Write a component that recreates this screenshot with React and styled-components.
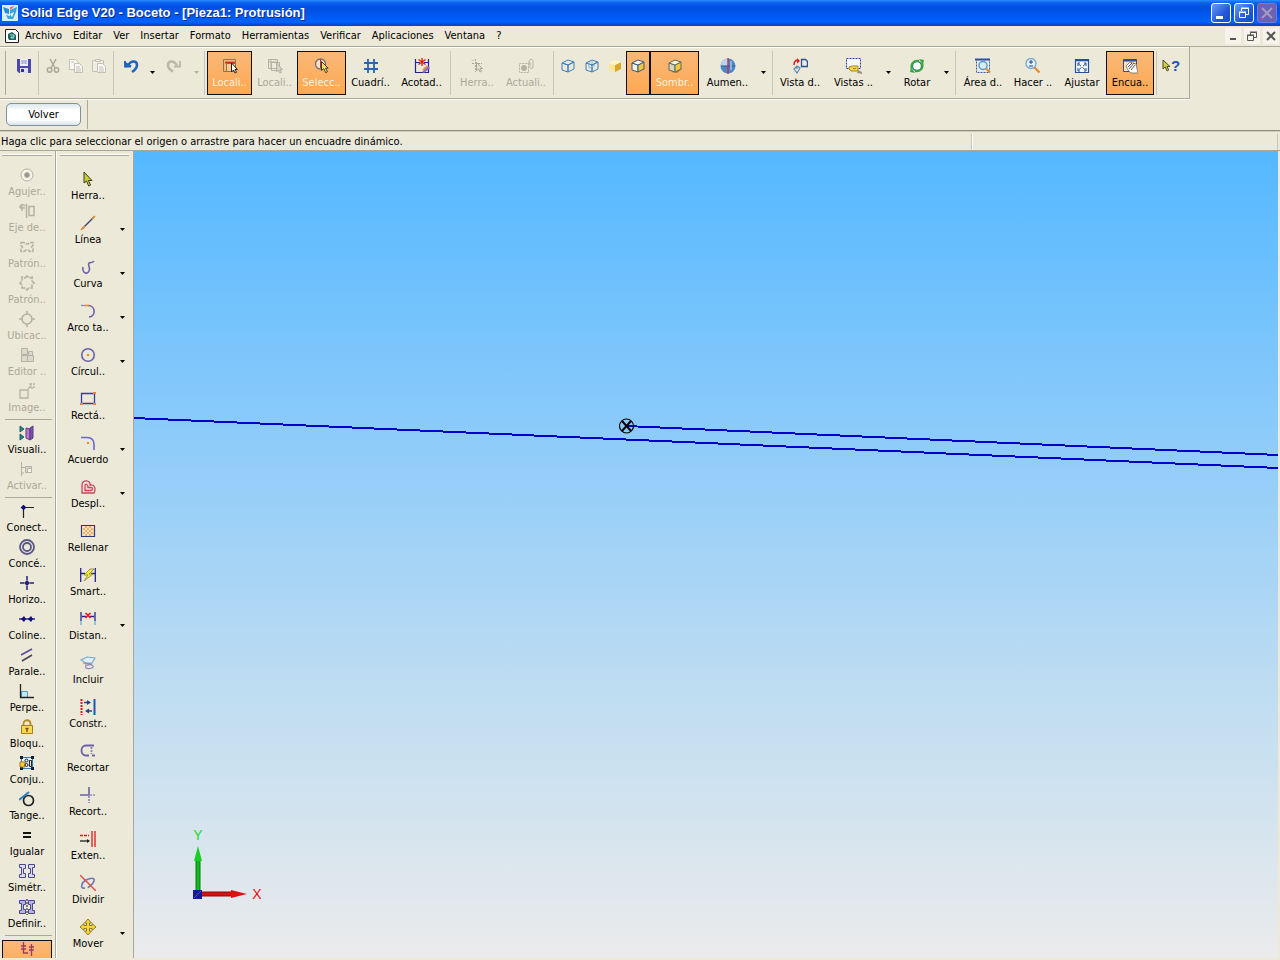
import React from 'react';
import styled, { createGlobalStyle, css } from 'styled-components';

const COLORS = {
  face: '#ece9d8',
  shadow: '#aca899',
  disabled: '#b5b2a3',
  navy: '#10107c',
  blue: '#2c62b8',
  violet: '#6a62a8',
  orange: '#e88a28',
  red: '#d81c1c',
};

const MENU = [
  'Archivo',
  'Editar',
  'Ver',
  'Insertar',
  'Formato',
  'Herramientas',
  'Verificar',
  'Aplicaciones',
  'Ventana',
  '?',
];

const cube = (stroke, side, front = 'none', top = 'none') => (
  <g stroke={stroke} strokeLinejoin="round">
    <path d="M2 5l6 2v7l-6-2z" fill={front} />
    <path d="M8 7l6-3v7l-6 3z" fill={side} />
    <path d="M2 5l6-3 6 2-6 3z" fill={top} />
  </g>
);

const ICONS = {
  save: (
    <g>
      <path d="M1 1h14v14H3l-2-2z" fill="#4a48a8" />
      <path d="M4 1h8v7H4z" fill="#eef" />
      <path d="M5 3h6M5 5h6" stroke="#8a88c8" />
      <path d="M4 10h8v5H4z" fill="#dde" />
      <path d="M5 11h3v3H5z" fill="#33318a" />
    </g>
  ),
  cut: (
    <g stroke="#aaa798" strokeWidth="1.5">
      <path d="M5 1l5 9M11 1l-5 9" />
      <circle cx="4.500" cy="12" r="2.200" />
      <circle cx="11.500" cy="12" r="2.200" />
    </g>
  ),
  copy: (
    <g stroke="#c3c0b4" fill="#f8f7f2">
      <path d="M1.500 1.500h6l3 3v7h-9z" />
      <path d="M6.500 5.500h5l3 3v6h-8z" />
      <path d="M8 9h4M8 11h5M8 13h5M3 4h3" />
    </g>
  ),
  paste: (
    <g stroke="#c3c0b4" fill="#f0eee4">
      <path d="M1.500 2.500h11v11h-11z" />
      <path d="M4.500 1.500h5v2h-5z" />
      <path d="M6.500 5.500h5l3 3v6h-8z" fill="#faf9f5" />
      <path d="M8 9h4M8 11h5M8 13h5" />
    </g>
  ),
  undo: (
    <g stroke="#2163c0" strokeWidth="2.600">
      <path d="M5 7.500C8 2 14 2.500 14 7c0 3-2 5-5 7" />
      <path d="M1 3l1.200 6.500L9 8z" fill="#2163c0" stroke="none" />
      <path d="M2 3v5.500h6" strokeWidth="1.800" />
    </g>
  ),
  redo: (
    <g stroke="#b9b6aa" strokeWidth="2.600">
      <path d="M11 7.500C8 2 2 2.500 2 7c0 3 2 5 5 6.500" />
      <path d="M14 3v5.500H8" strokeWidth="1.800" />
    </g>
  ),
  locate: (
    <g>
      <path d="M1.500 1.500h12v12h-12z" fill="#f6b878" stroke="#8d7350" />
      <path d="M4.500 5.500h9v8h-9z" fill="#fbc890" stroke="#8d7350" />
      <path d="M3 4.500h10" stroke="#e02c1c" strokeWidth="1.800" />
      <path d="M9.500 5v9l2-2 1.500 3 1.500-.7-1.400-2.800h2.400z" fill="#fff" stroke="#222" />
    </g>
  ),
  locateOff: (
    <g stroke={COLORS.disabled}>
      <path d="M1.500 1.500h9v9h-9zM4.500 4.500h8v8h-8zM1 4h9M4 1v9" />
      <path d="M9.500 5v9l2-2 1.500 3 1.500-.7-1.400-2.800h2.400z" fill="#d5d2c6" />
    </g>
  ),
  select: (
    <g>
      <circle cx="6.500" cy="6" r="5" fill="#fbe4cc" stroke="#7c6a70" strokeWidth="1.300" />
      <path d="M6.500 1v9" stroke="#b23c22" />
      <path d="M7.500 3.500v9l2.200-1.800 2 4 1.800-1-2-3.500h2.700z" fill="#efe06a" stroke="#3c3a22" />
    </g>
  ),
  grid: <path d="M5 1v14M11 1v14M1 5h14M1 11h14" stroke={COLORS.blue} strokeWidth="1.800" />,
  dims: (
    <g>
      <path d="M1.500 1v14M14.500 1v14M1.500 14.500h13M2 4.500h4M10 4.500h4" stroke="#24248c" strokeWidth="1.200" />
      <path d="M8 0v8M4.500 1.500l7 5M11.500 1.500l-7 5" stroke="#e01818" strokeWidth="1.300" />
      <path d="M8 14l6-6 2 2-6 5z" fill="#8a6ac0" />
      <path d="M9 12l4-4" stroke="#e88a28" strokeWidth="1.600" />
    </g>
  ),
  pickOff: (
    <g stroke="#aaa798">
      <path d="M6.500 1v4M3 5.500h4M9 5.500h4M6.500 7v7M3 1.500l2 2" strokeDasharray="2 1" />
      <path d="M7.500 4.500v8l2-1.500 1.500 3 1.500-.7-1.400-2.800h2.400z" fill="#e4e1d4" />
    </g>
  ),
  updateOff: (
    <g stroke="#b3b0a4">
      <path d="M1.500 5.500h9v9h-9z" strokeDasharray="2 1" />
      <circle cx="6" cy="10" r="2.500" fill="#b3b0a4" />
      <path d="M11 6c-1-6 5-6 4-1v3c0 4-4 3-3-1V4" />
    </g>
  ),
  wire: cube('#3c7fbe', 'none'),
  wireHidden: (
    <g>
      {cube('#3c7fbe', 'none')}
      <path d="M5 10l6-3M8 2v4M5 4v6" stroke="#8db9dd" />
    </g>
  ),
  shade: cube('none', '#dca62a', '#fbe69a', '#fff6c8'),
  shadeEdge: cube('#345a86', '#f0c83a', '#f4f0dc', '#fff8e0'),
  shadow: (
    <g>
      <path d="M4 14l6 1 5-4-3-3z" fill="#b07a3c" />
      {cube('#5a6a62', '#f0c83a', '#d9d4c0', '#fdf3d0')}
    </g>
  ),
  sharpen: (
    <g>
      <circle cx="8" cy="8" r="7.500" fill="#4c88c6" />
      <path d="M8 .5A7.500 7.500 0 0 0 .5 8H8z" fill="#b7d4ec" />
      <path d="M1 8h14" stroke="#245a94" />
      <path d="M11 3v9" stroke="#86b4e0" strokeWidth="2" />
      <path d="M8 0v16" stroke="#d02840" strokeWidth="1.300" />
    </g>
  ),
  viewOrient: (
    <g>
      <path d="M2 7C2 3 4 2 6 2.500" stroke={COLORS.red} strokeWidth="1.500" />
      <path d="M5 0l3 3-3 2.500z" fill={COLORS.red} />
      <path d="M9.500 1.500h4l2 2v5h-6z" stroke="#24509a" strokeWidth="1.300" />
      <path d="M2 11l3-3 3 2-3 5zM5 8v3" stroke="#5a86b6" strokeWidth="1.200" />
    </g>
  ),
  namedViews: (
    <g>
      <path d="M.5 .5h14v10H.5z" fill="#f4f8fc" stroke="#2a3f98" strokeDasharray="2 1" />
      <path d="M3 9l3-1h6v5H5l-2-2z" fill="#f6d44a" stroke="#a88420" />
      <path d="M12 12l4 2v2l-5-1z" fill="#9a9484" />
      <path d="M7 10.500h3" stroke="#a88420" />
    </g>
  ),
  rotate: (
    <g>
      <circle cx="8" cy="8" r="4.500" fill="#f6fbf8" stroke="#2a6fa8" strokeWidth="1.300" />
      <path d="M3 11C1 6 5 2 10 3M13 5c2 5-2 9-7 8" stroke="#38a838" strokeWidth="2" />
      <path d="M10 1l5 1-1 5zM6 15l-5-1 1-5z" fill="#38a838" />
    </g>
  ),
  zoomArea: (
    <g>
      <path d="M1.500 1.500h13v13h-13z" stroke="#3a62b0" strokeDasharray="2 1" />
      <path d="M0 1.500h15" stroke="#2a4fa8" strokeWidth="2" />
      <circle cx="8" cy="7.500" r="4" fill="#d8ecf8" stroke="#5a96cc" strokeWidth="1.400" />
      <path d="M11 10.500l4 4" stroke={COLORS.orange} strokeWidth="2.200" />
    </g>
  ),
  zoom: (
    <g>
      <circle cx="6" cy="5.500" r="5" fill="#e6f2fa" stroke="#7aa6cc" strokeWidth="1.300" />
      <path d="M6 2v4M4 4h4M4 8h4" stroke="#24408c" />
      <path d="M9.500 9.500l5 5" stroke={COLORS.orange} strokeWidth="2.200" />
    </g>
  ),
  fit: (
    <g>
      <path d="M1.500 1.500h13v13h-13z" fill="#f4f8fc" stroke="#24509a" strokeWidth="1.200" />
      <path d="M1 2.500h14" stroke="#24509a" strokeWidth="1.600" />
      <path d="M4 5.500l8 7M12 5.500l-8 7" stroke="#24509a" strokeDasharray="4 2" />
      <path d="M4 8V5h2M12 8V5h-2M4 10v3h2M12 10v3h-2" stroke="#24509a" />
    </g>
  ),
  pan: (
    <g>
      <path d="M1.500 1.500h13v12h-13z" fill="#f8e2c0" stroke="#3a4a86" />
      <path d="M1 2.500h14" stroke="#2a4a9a" strokeWidth="2" />
      <path d="M4 8l4-4 6 2 2 9H9l-3-3z" fill="#fff" stroke="#8a8478" />
      <path d="M6 9l4-4M7 11l5-6M9 12l4-5" stroke="#5a544a" />
    </g>
  ),
  help: <path d="M1 2v9l2.200-2 2 4 1.500-1-1.800-3.500H8z" fill="#cdd048" stroke="#4a4c20" />,
  hole: (
    <g stroke={COLORS.disabled}>
      <circle cx="8" cy="8" r="6" fill="#f6f4ea" />
      <circle cx="8" cy="8" r="2.500" fill="#98958a" />
    </g>
  ),
  axisOff: (
    <g stroke={COLORS.disabled} strokeWidth="1.500">
      <path d="M7.500 1v14M1 5h5M3 3v5M10 3.500h5v9h-5z" />
      <path d="M1 5c0-4 4-4 5-2" />
    </g>
  ),
  patternRect: (
    <g stroke={COLORS.disabled} strokeWidth="1.600" strokeDasharray="4 1">
      <path d="M2 3.500h3l2 1.500h2l2-1.500h3v3L12.500 8l1.500 1.500v3h-3L9 11H7l-2 1.500H2v-3L3.500 8 2 6.500z" />
    </g>
  ),
  patternCircle: (
    <g stroke={COLORS.disabled} strokeWidth="1.600">
      <path d="M6 3l2-2 2 2 3-1v4l2 2-2 2v3l-3 0-2 2-2-2H3v-3L1 8l2-2V2z" strokeDasharray="5 1" />
    </g>
  ),
  location: (
    <g stroke={COLORS.disabled} strokeWidth="1.600">
      <circle cx="8" cy="8" r="5" />
      <path d="M8 0v3M8 13v3M0 8h3M13 8h3" />
    </g>
  ),
  editor: (
    <g stroke={COLORS.disabled}>
      <path d="M2.500 1.500h6v6h-6zM2.500 8.500h6v6h-6zM8.500 8.500h6v6h-6zM9.500 4.500h4v4h-4z" fill="#dcd9cc" />
    </g>
  ),
  image: (
    <g stroke={COLORS.disabled} strokeWidth="1.300">
      <path d="M1 7h8v8H1z" />
      <path d="M9 6l4-4M11 1h4v4h-4z" strokeDasharray="2 1" />
    </g>
  ),
  visual: (
    <g>
      <path d="M1 1l4 3-4 3zM1 9l4 3-4 3z" fill="#1c8a7c" stroke="#24606c" />
      <path d="M7 3l4 1v11l-4-2z" fill="#b878c8" stroke="#583a88" />
      <path d="M11 3l3-2v12l-3 2z" fill="#7a50a8" stroke="#583a88" />
    </g>
  ),
  activate: (
    <g stroke={COLORS.disabled}>
      <path d="M2.500 1v14M2 6.500h5M2 12h3" />
      <path d="M6.500 5.500h6v6h-6z" fill="#dcd9cc" />
      <path d="M8.500 7.500h4v4h-4z" fill="#f8f7f0" />
    </g>
  ),
  connect: (
    <g stroke="#222" strokeWidth="1.200">
      <path d="M4.500 15V4.500H15" />
      <path d="M2.500 4.500l2-2 2 2-2 2z" fill={COLORS.navy} stroke={COLORS.navy} />
    </g>
  ),
  concentric: (
    <g stroke="#5a5688" strokeWidth="1.800">
      <circle cx="8" cy="8" r="7" />
      <circle cx="8" cy="8" r="4" />
    </g>
  ),
  horizontal: (
    <g stroke="#24207c" strokeWidth="1.500">
      <path d="M8 1v14M1 8h14" strokeDasharray="4 1" />
      <path d="M5 8l3-3 3 3-3 3z" fill="#24207c" stroke="none" />
    </g>
  ),
  collinear: (
    <g>
      <path d="M0 8h16" stroke={COLORS.navy} strokeWidth="1.300" />
      <path d="M2 8l3-3 2 3-2 3zM9 8l3-3 2 3-2 3z" fill={COLORS.navy} />
    </g>
  ),
  parallel: (
    <g strokeWidth="1.600">
      <path d="M2 8l11-6" stroke="#5a4c9c" />
      <path d="M3 14l10-6" stroke="#4a4454" />
    </g>
  ),
  perpendicular: (
    <g>
      <path d="M2.500 8.500h6v6h-6z" fill="#c4e6f4" stroke="#4a9ac4" />
      <path d="M1.500 1v13.500H15" stroke="#222" strokeWidth="1.300" />
    </g>
  ),
  lock: (
    <g>
      <path d="M4.500 7V5c0-5 7-5 7 0v2" stroke="#b88a20" strokeWidth="1.800" />
      <path d="M2.500 6.500h11v8h-11z" fill="#fbd850" stroke="#a87c18" />
      <path d="M8 9v4M6.500 9.500h3" stroke="#6a4c10" strokeWidth="1.300" />
    </g>
  ),
  rigid: (
    <g>
      <path d="M2.500 2.500h11v11h-11z" fill="#e6f2fa" stroke="#2a82b8" />
      <path d="M1 1h3v3H1zM12 1h3v3h-3zM1 12h3v3H1zM12 12h3v3h-3z" fill="#102030" />
      <path d="M1 7h5v5H1z" fill="#f8ce3c" stroke="#a87c18" />
      <path d="M10.500 5.500h2v6h-2z" stroke="#222" />
      <circle cx="7.500" cy="5.500" r="1.500" stroke="#222" />
      <circle cx="7.500" cy="10" r="1.500" stroke="#222" />
    </g>
  ),
  tangent: (
    <g>
      <circle cx="9.500" cy="9.500" r="5" stroke="#222" strokeWidth="1.700" />
      <path d="M0 9l10-8" stroke="#2a7cc0" strokeWidth="1.800" />
    </g>
  ),
  equal: <path d="M4 6h8M4 10h8" stroke="#111" strokeWidth="2" />,
  symmetric: (
    <g fill="#dcdaf0" stroke="#4a4690">
      <path d="M.5 1.500h6v4h-2v5h2v4h-6v-3h2v-7h-2zM15.500 1.500h-6v4h2v5h-2v4h6v-3h-2v-7h2z" />
    </g>
  ),
  symAxis: (
    <g fill="#b8b6e0" stroke="#4a4690">
      <path d="M.5 1.500h6v4h-2v5h2v4h-6v-3h2v-7h-2zM15.500 1.500h-6v4h2v5h-2v4h6v-3h-2v-7h2z" />
      <path d="M8 0v16" strokeDasharray="2 1" stroke="#111" />
    </g>
  ),
  handles: (
    <path
      d="M4.500 1v11H9M2 5h5M2 8h5M12.500 3v12M10 6h5M10 9h5"
      stroke="#a03868"
      strokeWidth="1.300"
    />
  ),
  arrow: (
    <path d="M4 1v11l2.500-2 2.200 5 2-1-2.400-4.500H12z" fill="#c4cc3c" stroke="#3c3e18" />
  ),
  line: (
    <g>
      <path d="M2 14L14 2" stroke="#44447c" strokeWidth="1.400" />
      <path d="M1 15l4-4M12 4l3-3" stroke={COLORS.orange} strokeWidth="1.600" />
    </g>
  ),
  curve: (
    <path d="M3 8c-1 6 4 8 6 4s-2-6 0-8c2-1 4 0 5-2" stroke={COLORS.violet} strokeWidth="1.600" />
  ),
  arc: (
    <g strokeWidth="1.600">
      <path d="M8 2.500c8 0 8 11 1 11.500" stroke={COLORS.violet} />
      <path d="M1 2.500h4" stroke="#8c88b8" strokeWidth="1.300" />
      <path d="M5 2.500h4" stroke={COLORS.orange} strokeWidth="1.600" />
    </g>
  ),
  circle: (
    <g>
      <circle cx="8" cy="8" r="6.300" stroke={COLORS.violet} strokeWidth="1.600" />
      <path d="M7 7h2v2H7z" fill={COLORS.orange} />
    </g>
  ),
  rect: (
    <g>
      <path d="M1.500 2.500h13v10h-13z" stroke="#3a3a98" strokeWidth="1.300" />
      <path d="M0 12h3v2H0zM13 1h3v2h-3zM13 12h3v2h-3z" fill={COLORS.orange} />
    </g>
  ),
  fillet: (
    <g>
      <path d="M1 2.500h6c5 0 7 3 7 7V15" stroke="#6a68d0" strokeWidth="1.600" />
      <path d="M7 7h2v2H7z" fill={COLORS.orange} />
    </g>
  ),
  offset: (
    <g stroke="#d04058" strokeWidth="1.300">
      <path d="M2 14V6c0-6 9-5 8 0 5-1 6 4 4 8z" />
      <path d="M5 11.500V6.500c0-2 3-2 3 2h3c2 0 2 3 0 3z" fill="#f8dcdc" />
    </g>
  ),
  fill: (
    <g>
      <path d="M1.500 2.500h13v11h-13z" fill="#fbe4c0" stroke="#2a3a78" strokeWidth="1.200" />
      <path
        d="M3 5l8 8M3 9l4 4M5 3l9 9M9 3l5 5M13 5l-8 8M13 9l-4 4M11 3l-8 8M7 3L3 7"
        stroke="#e8a058"
        strokeWidth=".8"
      />
    </g>
  ),
  smart: (
    <g>
      <path d="M.700 1v14M15.300 1v14M1 6.500h4M11 6.500h4" stroke="#24248c" strokeWidth="1.300" />
      <path d="M10 2L4 8h4l-4 6 9-7H9l5-5z" fill="#f4ea3c" stroke="#8a8420" strokeWidth=".8" />
    </g>
  ),
  distance: (
    <g>
      <path d="M1 1v9M15 1v9M2 5.500h4M10 5.500h4" stroke="#24248c" strokeWidth="1.300" />
      <path d="M1 10v4M15 10v4" stroke="#90c4e0" strokeWidth="2" />
      <path d="M5.500 2l5 5M10.500 2l-5 5" stroke="#e01c2c" strokeWidth="1.700" />
    </g>
  ),
  include: (
    <g strokeWidth="1.200">
      <path d="M1 5l6-3 8 1-3 5H6z" fill="#e0f0fa" stroke="#7aa8d0" />
      <path d="M3 8l9 1M6 11c-3 4 9 3 7 0s-6 0-8-1" stroke="#8a84b8" />
    </g>
  ),
  construction: (
    <g>
      <path d="M1.500 0v16" stroke={COLORS.red} strokeWidth="2" strokeDasharray="2 1" />
      <path d="M14.500 0v16" stroke="#2452b0" strokeWidth="2" />
      <path d="M4 3.500h4M8 12h4" stroke="#24408c" strokeWidth="1.300" />
      <path d="M7 1l4 2.500L7 6zM9 9.500L5 12l4 2.500z" fill="#24408c" />
    </g>
  ),
  trim: (
    <g strokeWidth="1.800">
      <path d="M14 2.500H6c-6 0-6 10 0 10h3M12 12.500h3" stroke={COLORS.violet} />
      <path d="M11.500 4v7" stroke="#8a84b8" strokeDasharray="2 1" />
    </g>
  ),
  trimCorner: (
    <g stroke={COLORS.violet} strokeWidth="1.600">
      <path d="M0 8h9V0" />
      <path d="M10 8h6M9 9v7" strokeWidth="1.200" strokeDasharray="2 1" />
    </g>
  ),
  extend: (
    <g>
      <path d="M0 4.500h9" stroke={COLORS.red} strokeWidth="1.700" strokeDasharray="3 1" />
      <path d="M0 10h9" stroke="#222" strokeWidth="1.300" />
      <path d="M7 8l3 2-3 2z" fill="#222" />
      <path d="M12 0v16M15 0v16" stroke={COLORS.red} strokeWidth="1.300" />
    </g>
  ),
  split: (
    <g strokeWidth="1.400">
      <path d="M5 13c-6 1-3-6 1-8s9-3 8 1-5 5-6 7" stroke="#6c78b8" strokeWidth="1.600" />
      <path d="M0 0l16 16" stroke="#e04a4a" />
    </g>
  ),
  move: (
    <path
      d="M8 0l3.500 4H9.500v2.500H12v-2L16 8l-4 3.500v-2H9.500V12h2L8 16l-3.500-4h2V9.500H4v2L0 8l4-3.500v2h2.500V4h-2z"
      fill="#f4d438"
      stroke="#7c6418"
      strokeWidth=".8"
    />
  ),
};

const TOOLBAR = [
  { icon: 'save', title: 'Guardar', width: 24 },
  { sep: true },
  { icon: 'cut', title: 'Cortar', width: 23, disabled: true },
  { icon: 'copy', title: 'Copiar', width: 23, disabled: true },
  { icon: 'paste', title: 'Pegar', width: 24, disabled: true },
  { sep: true },
  { icon: 'undo', title: 'Deshacer', width: 30 },
  { more: true, width: 12 },
  { icon: 'redo', title: 'Rehacer', width: 32, disabled: true },
  { more: true, width: 12, disabled: true },
  { sep: true },
  { icon: 'locate', label: 'Locali..', width: 45, active: true },
  { icon: 'locateOff', label: 'Locali..', width: 45, disabled: true },
  { icon: 'select', label: 'Selecc..', width: 49, active: true },
  { icon: 'grid', label: 'Cuadrí..', width: 49 },
  { icon: 'dims', label: 'Acotad..', width: 53 },
  { sep: true },
  { icon: 'pickOff', label: 'Herra..', width: 48, disabled: true },
  { icon: 'updateOff', label: 'Actuali..', width: 50, disabled: true },
  { sep: true },
  { icon: 'wire', title: 'Estructura alámbrica', width: 24 },
  { icon: 'wireHidden', title: 'Aristas ocultas', width: 23 },
  { icon: 'shade', title: 'Sombreado', width: 23 },
  { icon: 'shadeEdge', title: 'Sombreado con aristas', width: 24, active: true },
  { icon: 'shadow', label: 'Sombr..', width: 49, active: true },
  { icon: 'sharpen', label: 'Aumen..', width: 57 },
  { more: true, width: 14 },
  { sep: true },
  { icon: 'viewOrient', label: 'Vista d..', width: 50 },
  { icon: 'namedViews', label: 'Vistas ..', width: 57 },
  { more: true, width: 12 },
  { icon: 'rotate', label: 'Rotar', width: 46 },
  { more: true, width: 13 },
  { sep: true },
  { icon: 'zoomArea', label: 'Área d..', width: 50 },
  { icon: 'zoom', label: 'Hacer ..', width: 50 },
  { icon: 'fit', label: 'Ajustar', width: 48 },
  { icon: 'pan', label: 'Encua..', width: 48, active: true, dark: true },
  { sep: true },
  { help: true },
];

const RELATIONS = [
  { icon: 'hole', label: 'Agujer..', disabled: true },
  { icon: 'axisOff', label: 'Eje de..', disabled: true },
  { icon: 'patternRect', label: 'Patrón..', disabled: true },
  { icon: 'patternCircle', label: 'Patrón..', disabled: true },
  { icon: 'location', label: 'Ubicac..', disabled: true },
  { icon: 'editor', label: 'Editor ..', disabled: true },
  { icon: 'image', label: 'Image..', disabled: true },
  { sep: true },
  { icon: 'visual', label: 'Visuali..' },
  { icon: 'activate', label: 'Activar..', disabled: true },
  { sep: true },
  { icon: 'connect', label: 'Conect..' },
  { icon: 'concentric', label: 'Concé..' },
  { icon: 'horizontal', label: 'Horizo..' },
  { icon: 'collinear', label: 'Coline..' },
  { icon: 'parallel', label: 'Parale..' },
  { icon: 'perpendicular', label: 'Perpe..' },
  { icon: 'lock', label: 'Bloqu..' },
  { icon: 'rigid', label: 'Conju..' },
  { icon: 'tangent', label: 'Tange..' },
  { icon: 'equal', label: 'Igualar' },
  { icon: 'symmetric', label: 'Simétr..' },
  { icon: 'symAxis', label: 'Definir..' },
  { sep: true },
  { icon: 'handles', title: 'Mostrar relaciones', active: true },
];

const DRAWING = [
  { icon: 'arrow', label: 'Herra..' },
  { icon: 'line', label: 'Línea', more: true },
  { icon: 'curve', label: 'Curva', more: true },
  { icon: 'arc', label: 'Arco ta..', more: true },
  { icon: 'circle', label: 'Círcul..', more: true },
  { icon: 'rect', label: 'Rectá..' },
  { icon: 'fillet', label: 'Acuerdo', more: true },
  { icon: 'offset', label: 'Despl..', more: true },
  { icon: 'fill', label: 'Rellenar' },
  { icon: 'smart', label: 'Smart..' },
  { icon: 'distance', label: 'Distan..', more: true },
  { icon: 'include', label: 'Incluir' },
  { icon: 'construction', label: 'Constr..' },
  { icon: 'trim', label: 'Recortar' },
  { icon: 'trimCorner', label: 'Recort..' },
  { icon: 'extend', label: 'Exten..' },
  { icon: 'split', label: 'Dividir' },
  { icon: 'move', label: 'Mover', more: true },
];

const Icon = ({ name }) => (
  <IconSvg viewBox="0 0 16 16" aria-hidden="true">
    {ICONS[name]}
  </IconSvg>
);

const Tool = ({ icon, label, title, ...props }) => (
  <ToolButton
    type="button"
    aria-label={title}
    disabled={props.disabled}
    $width={props.width}
    $height={props.height}
    $active={props.active}
    $dark={props.dark}
  >
    <Icon name={icon} />
    {label && <span>{label}</span>}
  </ToolButton>
);

const More = ({ width, disabled }) => (
  <MoreButton type="button" aria-label="Más opciones" disabled={disabled} $width={width}>
    <svg width="5" height="3" viewBox="0 0 5 3" aria-hidden="true">
      <path d="M0 0h5L2.500 3z" fill="currentColor" />
    </svg>
  </MoreButton>
);

const Help = () => (
  <HelpButton type="button" aria-label="Ayuda">
    <svg width="9" height="16" viewBox="0 0 9 16" aria-hidden="true">
      {ICONS.help}
    </svg>
    <span>?</span>
  </HelpButton>
);

const Viewport = () => (
  <Canvas>
    <svg width="100%" height="100%" role="img" aria-label="Boceto">
      <g stroke="#0000cc" strokeWidth="2" shapeRendering="crispEdges">
        <path d="M0 267L2288 367" />
        <path d="M492 275L1796 333" />
      </g>
      <g stroke="#000" fill="none">
        <circle cx="492.500" cy="275" r="7" strokeWidth="1.200" />
        <path d="M488 270l9 10M497 270l-9 10" strokeWidth="2" />
      </g>
      <path d="M62 743V708h4v35z" fill="#12b81c" stroke="#0a7a14" />
      <path d="M64 695l4 15h-8z" fill="#18d024" />
      <path d="M67 741h31v4H67z" fill="#d81010" stroke="#8c0c0c" />
      <path d="M113 743l-16 4v-8z" fill="#e01010" />
      <path d="M59 739h9v9h-9z" fill="#1616a0" />
      <path d="M60 747l7-7" stroke="#4a4ae0" />
      <AxisLabel x="64" y="689" fill="#10e020">
        Y
      </AxisLabel>
      <AxisLabel x="123" y="748" fill="#e81010">
        X
      </AxisLabel>
    </svg>
  </Canvas>
);

const App = () => (
  <Window>
    <GlobalStyle />
    <TitleBar>
      <svg width="16" height="16" viewBox="0 0 16 16" aria-hidden="true">
        <path d="M0 0h16v16H0z" fill="#d8eefa" />
        <path d="M1 2l6 2v5l-4-1z" fill="#2a8cd0" />
        <path d="M8 5l7-3-1 5-3 7H6l-2-4 4 1z" fill="#3aa4e0" />
        <path d="M8 2l5-1-5 4z" fill="#e8705c" />
        <path d="M8 9l4-2-2 5z" fill="#f4fbff" />
      </svg>
      <h1>Solid Edge V20 - Boceto - [Pieza1: Protrusión]</h1>
      <CaptionButton type="button" aria-label="Minimizar">
        <svg viewBox="0 0 18 18" aria-hidden="true">
          <path d="M4 12h7v3H4z" fill="#fff" />
        </svg>
      </CaptionButton>
      <CaptionButton type="button" aria-label="Restaurar">
        <svg viewBox="0 0 18 18" aria-hidden="true" stroke="#fff" fill="none">
          <path d="M6.500 7V4.500h7v6H11M6 4h8" />
          <path d="M4.500 8.500h6v5h-6zM4 8h7" />
        </svg>
      </CaptionButton>
      <CaptionButton type="button" aria-label="Cerrar" disabled>
        <svg viewBox="0 0 18 18" aria-hidden="true">
          <path d="M4 4l10 10M14 4L4 14" stroke="#a59ac0" strokeWidth="2" />
        </svg>
      </CaptionButton>
    </TitleBar>

    <MenuBar>
      <svg width="14" height="16" viewBox="0 0 14 16" aria-hidden="true">
        <path d="M.5 1.500h10l3 3v10H.5z" fill="#fff" stroke="#222" />
        <path d="M3 6l4-2 4 3v5H4l-1-2z" fill="#1c6460" />
        <path d="M5 7h4v2H6v1h3" fill="none" stroke="#a8e0dc" />
      </svg>
      {MENU.map(item => (
        <MenuItem key={item} type="button">
          {item}
        </MenuItem>
      ))}
      <ChildButtons>
        <ChildButton type="button" aria-label="Minimizar documento">
          <svg viewBox="0 0 12 12" aria-hidden="true">
            <path d="M3 9h6" stroke="#555" strokeWidth="2" />
          </svg>
        </ChildButton>
        <ChildButton type="button" aria-label="Restaurar documento">
          <svg viewBox="0 0 12 12" aria-hidden="true" stroke="#555" fill="none">
            <path d="M4.500 5V2.500h6v5H8M4 2h7M1.500 5.500h6v5h-6zM1 5h7" />
          </svg>
        </ChildButton>
        <ChildButton type="button" aria-label="Cerrar documento">
          <svg viewBox="0 0 12 12" aria-hidden="true">
            <path d="M2 2l8 8M10 2l-8 8" stroke="#555" strokeWidth="2" />
          </svg>
        </ChildButton>
      </ChildButtons>
    </MenuBar>

    <Toolbar>
      {TOOLBAR.map((item, i) => {
        if (item.sep) return <ToolSeparator key={i} />;
        if (item.more) return <More key={i} {...item} />;
        if (item.help) return <Help key={i} />;
        return <Tool key={i} height={44} {...item} />;
      })}
    </Toolbar>

    <Ribbon>
      <ReturnButton type="button">Volver</ReturnButton>
    </Ribbon>

    <StatusBar>
      <StatusText>
        Haga clic para seleccionar el origen o arrastre para hacer un encuadre dinámico.
      </StatusText>
      <StatusPane />
    </StatusBar>

    <Main>
      <RelationBar>
        {RELATIONS.map((item, i) =>
          item.sep ? (
            <SideSeparator key={i} />
          ) : (
            <Tool key={i} width={50} height={36} {...item} />
          )
        )}
      </RelationBar>
      <DrawingBar>
        {DRAWING.map((item, i) => (
          <DrawingRow key={i}>
            <Tool width={56} height={44} {...item} />
            {item.more && <More width={12} />}
          </DrawingRow>
        ))}
      </DrawingBar>
      <Viewport />
    </Main>
  </Window>
);

const GlobalStyle = createGlobalStyle`
  body {
    margin: 0;
    background: ${COLORS.face};
  }

  *, *::before, *::after {
    box-sizing: border-box;
  }

  body, button {
    font-family: 'DejaVu Sans Condensed', 'Liberation Sans', sans-serif;
    font-size: 11px;
    line-height: 14px;
    color: #000;
  }

  button {
    margin: 0;
    padding: 0;
    border: none;
    background: none;
    flex-shrink: 0;
    white-space: nowrap;
  }
`;

const Window = styled.div`
  display: flex;
  flex-direction: column;
  height: 100vh;
  overflow: hidden;
  background: ${COLORS.face};
`;

const TitleBar = styled.header`
  display: flex;
  align-items: center;
  gap: 3px;
  flex-shrink: 0;
  height: 26px;
  padding: 0 3px 0 2px;
  background: linear-gradient(#2a8cff 0, #0a5ff0 3px, #0050e0 8px, #0058f0 16px, #0064ff 22px, #003cc0 26px);

  h1 {
    flex: 1;
    margin: 0;
    font: bold 13px/18px 'Liberation Sans', sans-serif;
    color: #fff;
    text-shadow: 1px 1px #0a2a8c;
  }
`;

const CaptionButton = styled.button`
  width: 20px;
  height: 20px;
  border: 1px solid #fff;
  border-radius: 3px;
  background: linear-gradient(135deg, #6a9cf8, #2358dc 60%, #1c48c4);

  svg {
    display: block;
  }

  &:disabled {
    border-color: #7a78c8;
    background: #6a62b4;
  }
`;

const MenuBar = styled.nav`
  display: flex;
  align-items: center;
  gap: 11px;
  flex-shrink: 0;
  height: 21px;
  padding: 0 1px 0 5px;
  border-bottom: 1px solid ${COLORS.shadow};

  > svg {
    margin-right: -5px;
  }
`;

const MenuItem = styled.button`
  height: 18px;
`;

const ChildButtons = styled.div`
  display: flex;
  gap: 3px;
  margin-left: auto;
`;

const ChildButton = styled.button`
  width: 16px;
  height: 16px;
  padding: 2px;
  background: #f5f3ea;

  svg {
    display: block;
  }
`;

const Toolbar = styled.div`
  display: flex;
  align-items: flex-start;
  align-self: flex-start;
  flex-shrink: 0;
  height: 52px;
  padding: 4px 6px 0 8px;
  border: solid ${COLORS.shadow};
  border-width: 0 1px 1px 0;
  box-shadow: inset 0 1px #fff, 0 1px #fff;

  &::before {
    content: '';
    width: 1px;
    height: 44px;
    margin: 0 6px 0 -3px;
    background: ${COLORS.shadow};
  }
`;

const ToolSeparator = styled.div`
  width: 1px;
  height: 44px;
  margin: 0 2px;
  background: #c9c6b8;
`;

const IconSvg = styled.svg`
  display: block;
  width: 16px;
  height: 16px;
  fill: none;
`;

const ToolButton = styled.button`
  display: flex;
  flex-direction: column;
  align-items: center;
  gap: 2px;
  width: ${p => p.$width}px;
  height: ${p => p.$height}px;
  padding-top: ${p => (p.$height === 44 ? 7 : 1)}px;

  &:disabled {
    color: ${COLORS.shadow};
  }

  ${p =>
    p.$active &&
    css`
      padding-top: ${p.$height === 44 ? 6 : 0}px;
      border: 1px solid #111;
      background: linear-gradient(#f8b878, #ffa850);
      color: ${p.$dark ? '#000' : '#fff0dc'};
    `}
`;

const MoreButton = styled.button`
  display: flex;
  justify-content: center;
  width: ${p => p.$width}px;
  height: 44px;
  padding-top: 20px;

  &:disabled {
    color: ${COLORS.disabled};
  }
`;

const HelpButton = styled.button`
  display: flex;
  justify-content: center;
  width: 24px;
  height: 44px;
  padding-top: 7px;

  span {
    font: bold 15px/16px 'Liberation Sans', sans-serif;
    color: #2452b0;
  }
`;

const Ribbon = styled.div`
  display: flex;
  flex-shrink: 0;
  height: 32px;
  border-bottom: 1px solid #8f8c7e;
  box-shadow: 0 1px #d0cdbf;

  &::after {
    content: '';
    width: 1px;
    height: 29px;
    margin: 1px 0 0 6px;
    background: ${COLORS.shadow};
  }
`;

const ReturnButton = styled.button`
  width: 75px;
  height: 23px;
  margin: 4px 0 0 6px;
  border: 1px solid #8092a0;
  border-radius: 5px;
  background: linear-gradient(#dce6ec, #fff 30%, #fff 75%, #d8e2e8);
`;

const StatusBar = styled.footer`
  display: flex;
  flex-shrink: 0;
  height: 20px;
  padding: 3px 2px 0 0;
  border-bottom: 1px solid ${COLORS.shadow};
`;

const StatusText = styled.div`
  flex: 1;
  padding: 1px 1px 0;
`;

const StatusPane = styled.div`
  width: 24%;
  border-left: 1px solid #c9c6b8;
  border-right: 1px solid #c9c6b8;
  box-shadow: inset 1px 0 #fff;
`;

const Main = styled.main`
  display: flex;
  flex: 1;
  min-height: 0;
  padding: 0 2px 2px 0;
`;

const SideBar = styled.aside`
  display: flex;
  flex-direction: column;
  flex-shrink: 0;
  overflow: hidden;
  border-right: 1px solid ${COLORS.shadow};

  &::before {
    content: '';
    flex-shrink: 0;
    height: 2px;
    margin-top: 3px;
    border-top: 1px solid #fff;
    border-bottom: 1px solid ${COLORS.shadow};
  }
`;

const RelationBar = styled(SideBar)`
  width: 56px;
  padding: 0 3px 0 2px;

  &::before {
    margin-bottom: 10px;
  }
`;

const DrawingBar = styled(SideBar)`
  width: 78px;
  padding: 0 4px 0 3px;
  border-left: 1px solid #fff;

  &::before {
    margin-bottom: 8px;
  }
`;

const DrawingRow = styled.div`
  display: flex;
  flex-shrink: 0;
`;

const SideSeparator = styled.div`
  flex-shrink: 0;
  height: 1px;
  margin: 1px 0 4px 3px;
  background: ${COLORS.shadow};
`;

const Canvas = styled.section`
  flex: 1;
  min-width: 0;
  overflow: hidden;
  background: linear-gradient(#54b8ff, #8ccbfa 35%, #bcdcf2 65%, #ebebeb);

  svg {
    display: block;
  }
`;

const AxisLabel = styled.text`
  font: 14px 'Liberation Sans', sans-serif;
  text-anchor: middle;
`;

export default App;
